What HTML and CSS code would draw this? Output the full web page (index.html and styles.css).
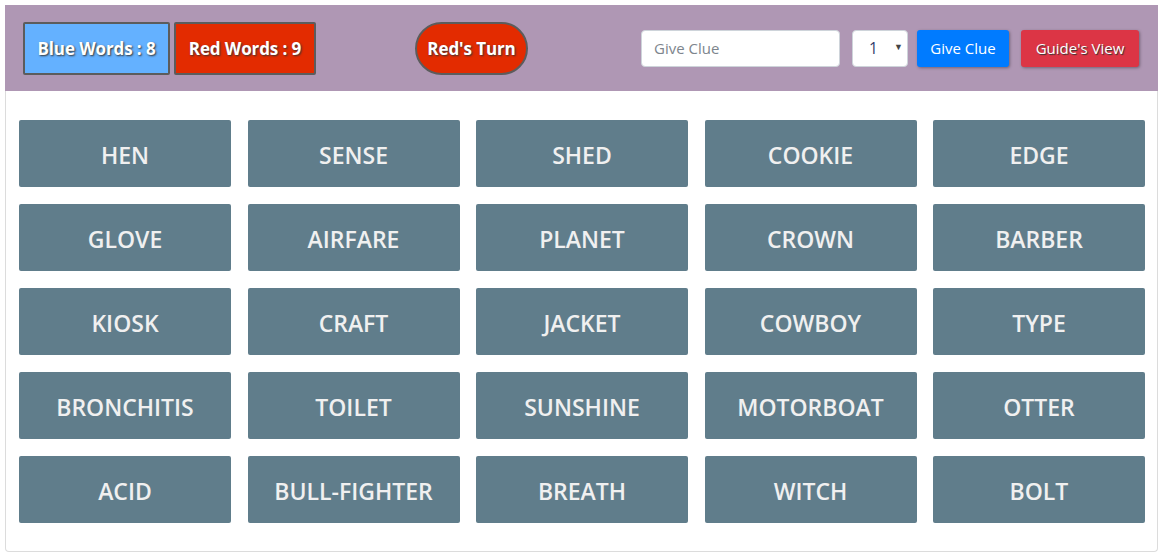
FILE: index.html
```html
<!DOCTYPE html>
<html>
<head>
<meta charset="utf-8">
<link rel="stylesheet" href="styles.css">
</head>
<body>
<div class="header">
  <div class="scores">
    <div class="score blue">Blue Words : 8</div>
    <div class="score red">Red Words : 9</div>
  </div>
  <div class="turn">Red's Turn</div>
  <div class="controls">
    <input class="clue" type="text" placeholder="Give Clue">
    <div class="select"><span class="num">1</span><span class="arrow">▼</span></div>
    <button class="btn give">Give Clue</button>
    <button class="btn guide">Guide's View</button>
  </div>
</div>
<div class="card">
  <div class="grid">
    <div class="tile">HEN</div>
    <div class="tile">SENSE</div>
    <div class="tile">SHED</div>
    <div class="tile">COOKIE</div>
    <div class="tile">EDGE</div>
    <div class="tile">GLOVE</div>
    <div class="tile">AIRFARE</div>
    <div class="tile">PLANET</div>
    <div class="tile">CROWN</div>
    <div class="tile">BARBER</div>
    <div class="tile">KIOSK</div>
    <div class="tile">CRAFT</div>
    <div class="tile">JACKET</div>
    <div class="tile">COWBOY</div>
    <div class="tile">TYPE</div>
    <div class="tile">BRONCHITIS</div>
    <div class="tile">TOILET</div>
    <div class="tile">SUNSHINE</div>
    <div class="tile">MOTORBOAT</div>
    <div class="tile">OTTER</div>
    <div class="tile">ACID</div>
    <div class="tile">BULL-FIGHTER</div>
    <div class="tile">BREATH</div>
    <div class="tile">WITCH</div>
    <div class="tile">BOLT</div>
  </div>
</div>
</body>
</html>
```
FILE: styles.css
```css
* { box-sizing: border-box; }
html, body { background: #fff; }
body {
  margin: 0;
  padding: 5px 8px 4px 5px;
  font-family: "Open Sans", "Liberation Sans", sans-serif;
}
.header {
  height: 86px;
  background: #af97b4;
  display: flex;
  align-items: center;
  padding: 0 19px 0 18px;
}
.scores { display: flex; gap: 4px; }
.score {
  height: 53px;
  border: 2px solid #5c5c5c;
  border-radius: 2px;
  color: #fff;
  font-weight: 700;
  font-size: 17px;
  display: flex;
  align-items: center;
  justify-content: center;
  text-shadow: 1px 1px 2px #333;
  letter-spacing: -0.1px;
}
.score.blue { width: 147px; background: #64b1ff; }
.score.red { width: 142px; background: #e32b00; }
.turn {
  margin-left: 99px;
  width: 113px;
  height: 53px;
  border: 2px solid #5c5c5c;
  border-radius: 27px;
  background: #e32b00;
  color: #fff;
  font-weight: 700;
  font-size: 17px;
  display: flex;
  align-items: center;
  justify-content: center;
  text-shadow: 1px 1px 2px #333;
  letter-spacing: -0.1px;
}
.controls {
  margin-left: auto;
  display: flex;
  align-items: center;
}
.clue {
  width: 199px;
  height: 37px;
  border: 1px solid #ced4da;
  border-radius: 4px;
  padding: 0 12px;
  font-family: inherit;
  font-size: 15px;
  color: #495057;
  outline: none;
}
.clue::placeholder { color: #7d858d; }
.select {
  margin-left: 12px;
  width: 56px;
  height: 37px;
  background: #fff;
  border: 1px solid #ced4da;
  border-radius: 4px;
  display: flex;
  align-items: center;
  padding: 0 4px 0 16px;
  color: #2f3a6a;
  font-size: 15.5px;
}
.select .num { flex: 1; }
.select .arrow { font-size: 9px; color: #444; margin-top: -4px; }
.btn {
  height: 37px;
  border: none;
  border-radius: 3px;
  color: #fff;
  font-family: inherit;
  font-size: 15px;
  padding: 0;
  box-shadow: 1px 1px 3px rgba(0,0,0,0.35);
}
.btn.give { margin-left: 9px; width: 92px; background: #007bff; }
.btn.guide {
  margin-left: 12px;
  width: 118px;
  background: #dc3545;
  text-shadow: 1px 1px 1px #333;
}
.card {
  border: 1px solid #dcdcdc;
  border-top: none;
  border-radius: 0 0 4px 4px;
  padding: 29px 12px 28px 13px;
}
.grid {
  display: grid;
  grid-template-columns: repeat(5, 212px);
  column-gap: 16.5px;
  row-gap: 17px;
}
.tile {
  height: 67px;
  background: #607d8b;
  border-radius: 2px;
  color: #f0f0f0;
  font-weight: 600;
  font-size: 23px;
  padding-top: 2px;
  display: flex;
  align-items: center;
  justify-content: center;
  letter-spacing: 0;
}
```
